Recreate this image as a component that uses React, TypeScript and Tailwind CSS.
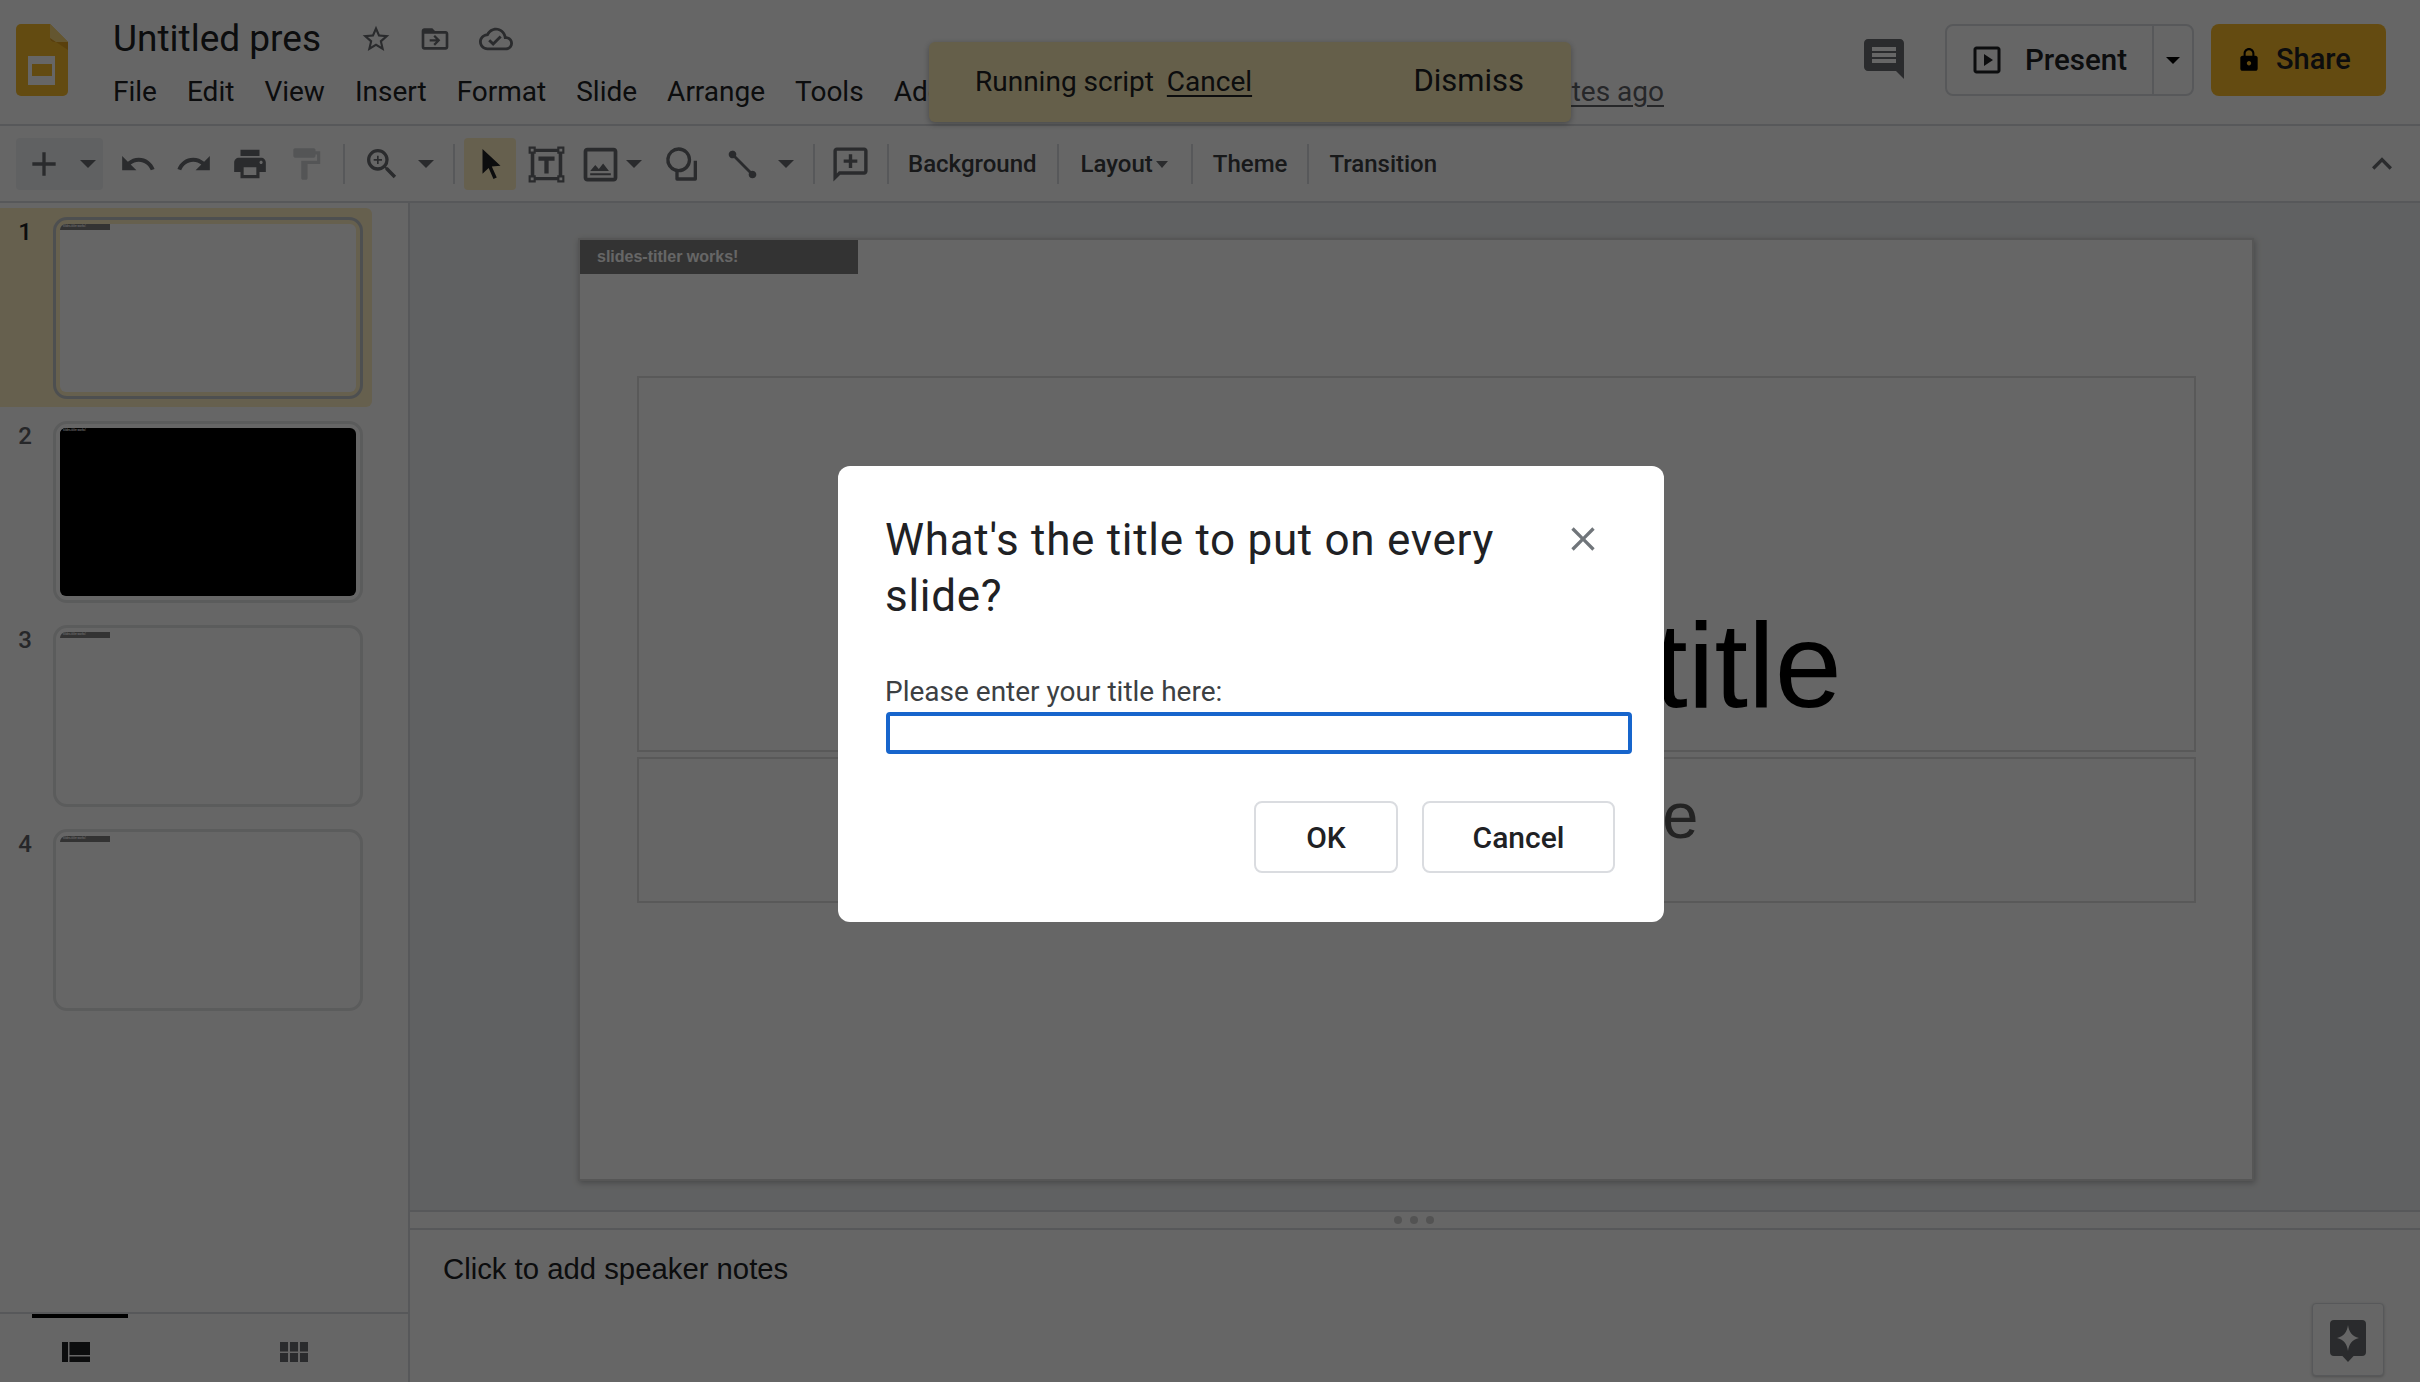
import React from 'react';

const roboto = "font-['Roboto',sans-serif]";
const arial = "font-['Liberation_Sans',Arial,sans-serif]";

const Icon: React.FC<{ d: string; className?: string; box?: string }> = ({ d, className, box = '0 0 24 24' }) => (
  <svg viewBox={box} className={`shrink-0 ${className}`} fill="currentColor" fillRule="evenodd">
    <path d={d} />
  </svg>
);

const paths = {
  star: 'M22 9.24l-7.19-.62L12 2 9.19 8.63 2 9.24l5.46 4.73L5.82 21 12 17.27 18.18 21l-1.63-7.03L22 9.24zM12 15.4l-3.76 2.27 1-4.28-3.32-2.88 4.38-.38L12 6.1l1.71 4.04 4.38.38-3.32 2.88 1 4.28L12 15.4z',
  move: 'M20 6h-8l-2-2H4c-1.1 0-2 .9-2 2v12c0 1.1.9 2 2 2h16c1.1 0 2-.9 2-2V8c0-1.1-.9-2-2-2zm0 12H4V8h16v10zm-8-1l4-4-4-4-1.2 1.2 1.95 1.95H8v1.7h4.75l-1.95 1.95L12 17z',
  cloud: 'M19.35 10.04C18.67 6.59 15.64 4 12 4 9.11 4 6.6 5.64 5.35 8.04 2.34 8.36 0 10.91 0 14c0 3.31 2.69 6 6 6h13c2.76 0 5-2.24 5-5 0-2.64-2.05-4.78-4.65-4.96zM19 18H6c-2.21 0-4-1.79-4-4 0-2.05 1.53-3.76 3.56-3.97l1.07-.11.5-.95C8.08 7.14 9.94 6 12 6c2.62 0 4.88 1.86 5.39 4.43l.3 1.5 1.53.11c1.56.1 2.78 1.41 2.78 2.96 0 1.65-1.35 3-3 3zm-9-3.82l-2.09-2.09L6.5 13.5 10 17l6.01-6.01-1.41-1.41z',
  undo: 'M12.5 8c-2.65 0-5.05.99-6.9 2.6L2 7v9h9l-3.62-3.62c1.39-1.16 3.16-1.88 5.12-1.88 3.54 0 6.55 2.31 7.6 5.5l2.37-.78C21.08 11.03 17.15 8 12.5 8z',
  redo: 'M18.4 10.6C16.55 8.99 14.15 8 11.5 8c-4.65 0-8.58 3.03-9.96 7.22L3.9 16c1.05-3.19 4.05-5.5 7.6-5.5 1.95 0 3.73.72 5.12 1.88L13 16h9V7l-3.6 3.6z',
  print: 'M19 8H5c-1.66 0-3 1.34-3 3v6h4v4h12v-4h4v-6c0-1.66-1.34-3-3-3zm-3 11H8v-5h8v5zm3-7c-.55 0-1-.45-1-1s.45-1 1-1 1 .45 1 1-.45 1-1 1zm-1-9H6v4h12V3z',
  roller: 'M18 4V3c0-.55-.45-1-1-1H5c-.55 0-1 .45-1 1v4c0 .55.45 1 1 1h12c.55 0 1-.45 1-1V6h1v4H9v11c0 .55.45 1 1 1h2c.55 0 1-.45 1-1v-9h8V4h-3z',
  plus: 'M19 13h-6v6h-2v-6H5v-2h6V5h2v6h6v2z',
  zoom: 'M15.5 14h-.79l-.28-.27A6.47 6.47 0 0 0 16 9.5 6.5 6.5 0 1 0 9.5 16c1.61 0 3.09-.59 4.23-1.57l.27.28v.79l5 4.99L20.49 19l-4.99-5zm-6 0C7.01 14 5 11.99 5 9.5S7.01 5 9.5 5 14 7.01 14 9.5 11.99 14 9.5 14zM10 7H9v2H7v1h2v2h1v-2h2V9h-2V7z',
  cursor: 'M7 2l12 11.2-5.8.5 3.3 7.3-2.2 1-3.2-7.4L7 18.5V2z',
  textbox: 'M2 2h4v1.2h12V2h4v4h-1.2v12H22v4h-4v-1.2H6V22H2v-4h1.2V6H2V2zm3.2 4v12H6v1h12v-1h.8V6H18V5H6v1h-.8zM3.2 3.2v1.6h1.6V3.2H3.2zm16 0v1.6h1.6V3.2h-1.6zm-16 16v1.6h1.6v-1.6H3.2zm16 0v1.6h1.6v-1.6h-1.6zM7.5 7.5h9v2.4h-3.3V17h-2.4V9.9H7.5V7.5z',
  image: 'M19 3H5c-1.1 0-2 .9-2 2v14c0 1.1.9 2 2 2h14c1.1 0 2-.9 2-2V5c0-1.1-.9-2-2-2zm0 16H5V5h14v14zM6.500 15.500l2.700-3.300 1.900 2.200 2.300-3 3.100 4.100H6.500zM6.500 16.700h11v1h-11z',
  shape: 'M10 2a7.5 7.5 0 0 0-2 14.73V21a1 1 0 0 0 1 1h11a1 1 0 0 0 1-1V10h-2v10H10v-3a7.5 7.5 0 0 0 0-15zm0 2a5.5 5.5 0 1 1 0 11 5.5 5.5 0 0 1 0-11z',
  line: 'M5.500 3a2.500 2.500 0 0 1 2.300 3.500L17.500 16.200a2.500 2.500 0 1 1-1.300 1.300L6.500 7.800A2.500 2.500 0 1 1 5.500 3z',
  addComment: 'M20 2H4c-1.1 0-2 .9-2 2v18l4-4h14c1.1 0 2-.9 2-2V4c0-1.1-.9-2-2-2zm0 14H5.2L4 17.2V4h16v12zM11 6h2v3h3v2h-3v3h-2v-3H8V9h3V6z',
  comment: 'M21.99 4c0-1.1-.89-2-1.99-2H4c-1.1 0-2 .9-2 2v12c0 1.1.9 2 2 2h14l4 4-.01-18zM18 14H6v-2h12v2zm0-3H6V9h12v2zm0-3H6V6h12v2z',
  present: 'M19 3H5c-1.1 0-2 .9-2 2v14c0 1.1.9 2 2 2h14c1.1 0 2-.9 2-2V5c0-1.1-.9-2-2-2zm0 16H5V5h14v14zM10 8v8l6-4-6-4z',
  lock: 'M18 8h-1V6c0-2.76-2.24-5-5-5S7 3.24 7 6v2H6c-1.1 0-2 .9-2 2v10c0 1.1.9 2 2 2h12c1.1 0 2-.9 2-2V10c0-1.1-.9-2-2-2zm-6 9c-1.1 0-2-.9-2-2s.9-2 2-2 2 .9 2 2-.9 2-2 2zm3.1-9H8.9V6c0-1.71 1.39-3.1 3.1-3.1 1.71 0 3.1 1.39 3.1 3.1v2z',
  close: 'M19 6.41L17.59 5 12 10.59 6.41 5 5 6.41 10.59 12 5 17.59 6.41 19 12 13.41 17.59 19 19 17.59 13.41 12z',
  up: 'M7.41 15.41L12 10.83l4.59 4.58L18 14l-6-6-6 6z',
  explore: 'M5 2h14a2 2 0 0 1 2 2v14a2 2 0 0 1-2 2h-4.2L12 23l-2.8-3H5a2 2 0 0 1-2-2V4a2 2 0 0 1 2-2zm7 2.5c-.5 3.6-2 5.6-5.5 6.5 3.5.9 5 2.900 5.500 6.500.5-3.600 2-5.600 5.500-6.500-3.500-.9-5-2.900-5.500-6.500z',
  film: 'M0 0h6v20H0zM7.500 0H28v13H7.500zM7.500 14.500H28V20H7.500z',
  grid: 'M0 0h8v9.500H0zM10 0h8v9.500h-8zM20 0h8v9.500h-8zM0 11h8v9H0zM10 11h8v9h-8zM20 11h8v9h-8z',
};

const iconGray = 'text-[#696c70]';

const Caret: React.FC<{ className?: string }> = ({ className = 'w-5' }) => (
  <div className={`flex justify-center items-center shrink-0 ${className}`}>
    <div className="w-0 h-0 border-x-[8px] border-x-transparent border-t-[8px] border-t-[#696c70]" />
  </div>
);

const Sep: React.FC<{ className?: string }> = ({ className = '' }) => <div className={`w-[2px] h-10 bg-[#dadce0] shrink-0 ${className}`} />;

const ToolBtn: React.FC<{ d: string; className?: string; size?: string; color?: string }> = ({ d, className = 'w-14', size = 'w-[38px] h-[38px]', color = iconGray }) => (
  <div className={`h-[52px] flex items-center justify-center shrink-0 ${className}`}>
    <Icon d={d} className={`${size} ${color}`} />
  </div>
);

const thumbs = [
  { n: 1, selected: true },
  { n: 2, dark: true },
  { n: 3 },
  { n: 4 },
];

const Thumb: React.FC<{ n: number; selected?: boolean; dark?: boolean }> = ({ n, selected, dark }) => (
  <div className={`w-[372px] h-[199px] mb-[5px] pt-[9px] flex rounded-r-[6px] ${selected ? 'bg-[#feefc3]' : ''}`}>
    <div className={`w-[50px] text-center text-[24px] leading-[30px] font-medium ${roboto} ${selected ? 'text-[#202124]' : 'text-[#5f6368]'}`}>{n}</div>
    <div className={`ml-[3px] w-[310px] h-[182px] border-[3px] rounded-[14px] p-1 ${selected ? 'border-[#c1c5c9]' : 'border-[#e4e5e6]'}`}>
      <div className={`w-full h-full rounded-[6px] overflow-hidden ${dark ? 'bg-black' : 'bg-white'}`}>
        <div className={`w-[50px] h-[6px] pl-[3px] text-[2.6px] leading-[6px] font-bold text-white whitespace-nowrap ${arial} ${dark ? 'bg-black' : 'bg-[#808080]'}`}>slides-titler works!</div>
      </div>
    </div>
  </div>
);

export default function App() {
  const menus = ['File', 'Edit', 'View', 'Insert', 'Format', 'Slide', 'Arrange', 'Tools', 'Add-ons', 'Help'];

  return (
    <div className={`relative w-[2420px] h-[1382px] overflow-hidden bg-white flex flex-col ${roboto}`}>
      {/* header */}
      <header className="h-[126px] shrink-0 flex border-b-2 border-[#dadce0] pl-4 pr-[34px]">
        <div className="mt-6 w-[52px] h-[72px] shrink-0">
          <svg viewBox="0 0 52 72" className="w-full h-full">
            <path d="M5 0h29l18 18v49a5 5 0 0 1-5 5H5a5 5 0 0 1-5-5V5a5 5 0 0 1 5-5z" fill="#f8bb2c" />
            <path d="M34 0l18 18H38a4 4 0 0 1-4-4z" fill="#fbd678" />
            <path d="M34 14a4 4 0 0 0 4 4h14v8z" fill="#e0a020" />
            <path d="M12 32h27v29H12z" fill="#fff" />
            <path d="M16 40h20v12H16z" fill="#f8bb2c" />
          </svg>
        </div>
        <div className="ml-[45px] w-[1551px] shrink-0">
          <div className="flex items-center h-[52px] mt-[13px]">
            <div className="text-[37px] leading-[52px] text-[#202124] w-[250px] whitespace-nowrap">Untitled pres</div>
            <Icon d={paths.star} className={`w-8 h-8 ml-[-3px] ${iconGray}`} />
            <Icon d={paths.move} className={`w-8 h-8 ml-[27px] ${iconGray}`} />
            <Icon d={paths.cloud} className={`w-[34px] h-[34px] ml-[28px] ${iconGray}`} />
          </div>
          <div className="flex items-center mt-[7px] h-10 text-[28px] text-[#202124] gap-[30px]">
            {menus.map((m) => <span key={m}>{m}</span>)}
            <span className="ml-auto text-[#5f6368] underline underline-offset-4">Last edit was 2 minutes ago</span>
          </div>
        </div>
        <Icon d={paths.comment} className={`w-12 h-12 ml-[196px] mt-[35px] ${iconGray}`} />
        <div className="ml-[37px] mt-6 h-[72px] w-[249px] shrink-0 flex border-2 border-[#dadce0] rounded-lg">
          <div className="w-[207px] flex items-center pl-[22px] border-r-2 border-[#dadce0]">
            <Icon d={paths.present} className="w-9 h-9 text-[#202124]" />
            <span className="ml-[20px] text-[29.5px] font-medium text-[#202124]">Present</span>
          </div>
          <Caret className="flex-1 [&>div]:border-t-black [&>div]:border-x-[7px] [&>div]:border-t-[7px]" />
        </div>
        <div className="ml-[17px] mt-6 h-[72px] w-[175px] shrink-0 flex items-center pl-[25px] bg-[#fabb2b] rounded-lg">
          <Icon d={paths.lock} className="w-[26px] h-[26px] text-black" />
          <span className="ml-[14px] text-[29px] font-medium text-[#202124]">Share</span>
        </div>
      </header>

      {/* toolbar */}
      <div className="h-[77px] shrink-0 flex items-center pt-px pl-4 pr-[18px] border-b-2 border-[#dadce0]">
        <div className="w-[87px] h-[52px] flex items-center rounded-[4px] bg-[#f1f3f4] shrink-0">
          <ToolBtn d={paths.plus} className="w-[56px]" size="w-10 h-10" />
          <Caret className="w-5 ml-[6px]" />
        </div>
        <ToolBtn d={paths.undo} className="w-14 ml-[7px]" />
        <ToolBtn d={paths.redo} />
        <ToolBtn d={paths.print} />
        <ToolBtn d={paths.roller} color="text-[#d2d4d7]" />
        <Sep className="ml-[9px]" />
        <ToolBtn d={paths.zoom} className="w-[52px] ml-[11px]" size="w-10 h-10" />
        <Caret className="w-5 ml-2" />
        <Sep className="ml-[17px]" />
        <div className="ml-[9px] w-[52px] h-[52px] rounded-[4px] bg-[#feefc3] flex items-center justify-center shrink-0">
          <Icon d={paths.cursor} className="w-9 h-9 text-[#202124]" />
        </div>
        <ToolBtn d={paths.textbox} className="w-[52px] ml-1" size="w-[43px] h-[43px]" />
        <ToolBtn d={paths.image} className="w-[52px] ml-[2px]" size="w-[45px] h-[45px]" />
        <Caret className="w-5 -ml-[2px]" />
        <ToolBtn d={paths.shape} className="w-[52px] ml-3" size="w-10 h-10" />
        <ToolBtn d={paths.line} className="w-[52px] ml-2" size="w-[37px] h-[37px]" />
        <Caret className="w-5 ml-2" />
        <Sep className="ml-[17px]" />
        <ToolBtn d={paths.addComment} className="w-[52px] ml-[9px]" size="w-[41px] h-[41px]" />
        <Sep className="ml-[11px]" />
        <div className="flex items-center text-[24px] font-medium text-[#3c4043]">
          <span className="ml-[19px]">Background</span>
          <Sep className="ml-[20px]" />
          <span className="ml-[22px]">Layout</span>
          <Caret className="w-4 ml-px [&>div]:border-x-[6px] [&>div]:border-t-[7px]" />
          <Sep className="ml-[21px]" />
          <span className="ml-[20px]">Theme</span>
          <Sep className="ml-5" />
          <span className="ml-5">Transition</span>
        </div>
        <Icon d={paths.up} className={`w-10 h-10 ml-auto ${iconGray}`} />
      </div>

      <div className="flex-1 flex min-h-0">
        {/* filmstrip */}
        <aside className="w-[410px] shrink-0 flex flex-col border-r-2 border-[#dadce0]">
          <div className="flex-1 pt-[5px]">
            {thumbs.map((t) => <Thumb key={t.n} {...t} />)}
          </div>
          <div className="h-[70px] shrink-0 border-t-2 border-[#dadce0] flex relative">
            <div className="absolute left-8 top-0 w-[96px] h-1 bg-black" />
            <Icon d={paths.film} box="0 0 28 20" className="w-[28px] h-5 ml-[62px] mt-[28px] text-[#202124]" />
            <Icon d={paths.grid} box="0 0 28 20" className={`w-[28px] h-5 ml-[190px] mt-[28px] ${iconGray}`} />
          </div>
        </aside>

        <main className="flex-1 min-w-0 flex flex-col">
          {/* workspace */}
          <div className="h-[1009px] shrink-0 bg-[#f1f3f4] flex justify-center pl-[2px] pt-[35px] border-b-2 border-[#dadce0]">
            <div className={`w-[1676px] h-[943px] bg-white border-2 border-[#d6d6d6] shadow-[1px_2px_6px_rgba(60,64,67,0.35)] flex flex-col ${arial}`}>
              <div className="w-[278px] h-[34px] shrink-0 bg-[#808080] pl-[17px] text-white text-[16px] leading-[34px] font-bold">slides-titler works!</div>
              <div className="mt-[102px] ml-[57px] mr-[56px] h-[376px] border-2 border-[#dedede] flex items-end justify-center pb-[14px] text-[120.5px] leading-[140px] text-black">Click to add title</div>
              <div className="mt-[5px] ml-[57px] mr-[56px] h-[146px] border-2 border-[#dedede] flex items-center justify-center pb-[28px] text-[65px] text-[#595959]">Click to add subtitle</div>
            </div>
          </div>
          <div className="h-[18px] shrink-0 border-b-2 border-[#dadce0] flex items-center justify-center gap-2 pr-[2px]">
            <div className="w-2 h-2 rounded-full bg-[#d0d0d0]" />
            <div className="w-2 h-2 rounded-full bg-[#d0d0d0]" />
            <div className="w-2 h-2 rounded-full bg-[#d0d0d0]" />
          </div>
          {/* notes */}
          <div className="flex-1 relative">
            <div className={`pl-[33px] pt-[22px] text-[29.3px] leading-[34px] text-[#202124] ${arial}`}>Click to add speaker notes</div>
            <div className="absolute right-[36px] bottom-[6px] w-[72px] h-[73px] rounded-[4px] bg-white border border-[#dadce0] shadow-[0_1px_3px_rgba(60,64,67,0.3)] flex items-center justify-center">
              <Icon d={paths.explore} className={`w-12 h-12 ${iconGray}`} />
            </div>
          </div>
        </main>
      </div>

      {/* running script toast */}
      <div className="absolute left-[929px] top-[42px] w-[642px] h-20 rounded-[6px] bg-[#fdedb9] shadow-[0_2px_6px_rgba(60,64,67,0.4)] flex items-center pl-[46px] pr-[47px] text-[#202124] text-[28px]">
        <span>Running script</span>
        <span className="ml-[13px] underline underline-offset-4">Cancel</span>
        <span className="ml-auto text-[31px] -mt-[2px]">Dismiss</span>
      </div>

      {/* dim layer and dialog */}
      <div className="absolute inset-0 bg-black/60" />
      <div className="absolute left-[838px] top-[466px] w-[826px] h-[456px] bg-white rounded-[12px] pl-[47px] pt-[46px]">
        <div className="flex">
          <div className="w-[660px] text-[44px] leading-[56px] tracking-[0.7px] text-[#202124]">What's the title to put on every slide?</div>
          <Icon d={paths.close} className="w-[40px] h-[40px] text-[#70757a] ml-[18px] mt-[7px]" />
        </div>
        <div className="mt-[50px] text-[28px] leading-[36px] text-[#3c4043]">Please enter your title here:</div>
        <input className="block w-[746px] h-[42px] ml-px mt-[2px] border-[4px] border-[#1765cc] rounded-[4px] outline-none" />
        <div className="mt-[47px] flex w-[730px] justify-end gap-6">
          <button className="w-[144px] h-[72px] border-2 border-[#dadce0] rounded-lg text-[30px] font-medium text-[#202124]">OK</button>
          <button className="w-[193px] h-[72px] border-2 border-[#dadce0] rounded-lg text-[30px] font-medium text-[#202124]">Cancel</button>
        </div>
      </div>
    </div>
  );
}
